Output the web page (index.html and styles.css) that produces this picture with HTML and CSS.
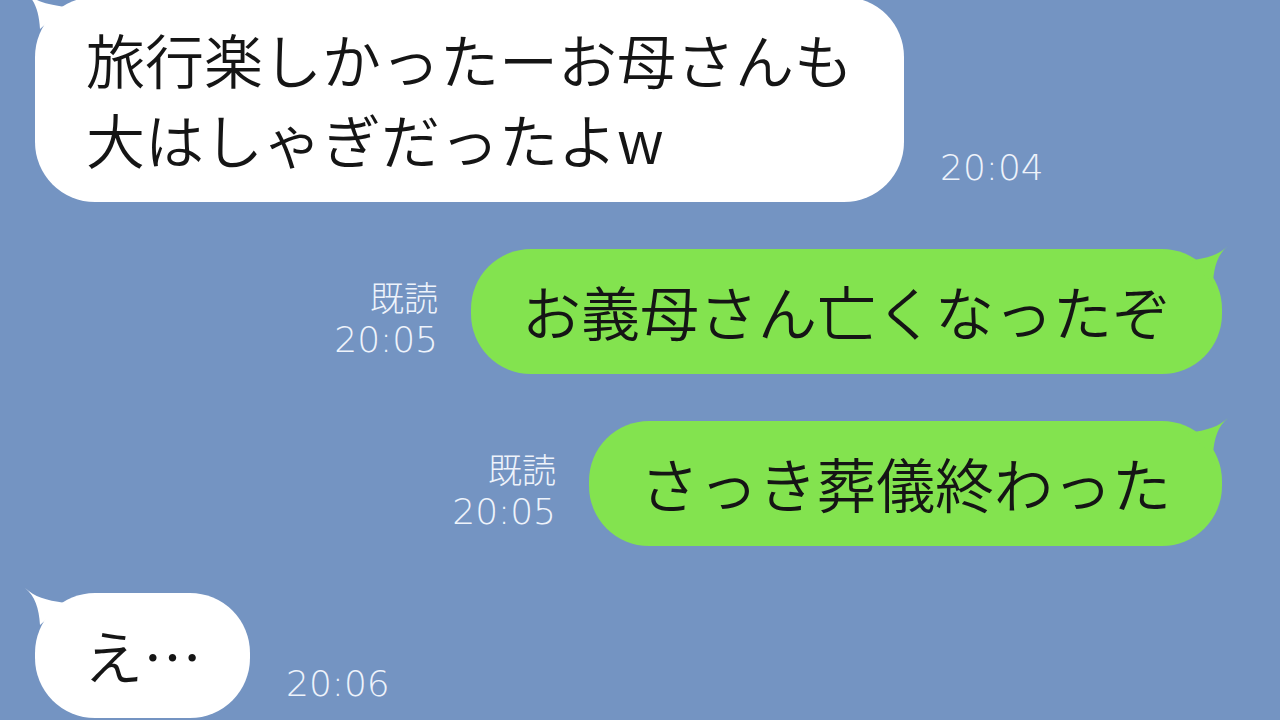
FILE: index.html
```html
<!DOCTYPE html>
<html lang="ja">
<head>
<meta charset="utf-8">
<link rel="stylesheet" href="styles.css">
</head>
<body>
<main class="chat">
  <div class="row left first">
    <div class="bubble white">
      <svg class="tail tail-left" viewBox="0 0 40 40" width="40" height="40"><path d="M0 0 C10 8 14 20 15 37 L40 15 C20 12 10 9 0 0 Z"/></svg>
      <p class="msg">旅行楽しかったーお母さんも<br>大はしゃぎだったよw</p>
    </div>
    <div class="meta"><span class="time">20:04</span></div>
  </div>
  <div class="row right">
    <div class="meta"><span class="read">既読</span><span class="time">20:05</span></div>
    <div class="bubble green">
      <svg class="tail tail-right" viewBox="0 0 40 40" width="40" height="40"><path d="M40 0 C30 8 26 20 25 37 L0 15 C20 12 30 9 40 0 Z"/></svg>
      <p class="msg">お義母さん亡くなったぞ</p>
    </div>
  </div>
  <div class="row right">
    <div class="meta"><span class="read">既読</span><span class="time">20:05</span></div>
    <div class="bubble green">
      <svg class="tail tail-right" viewBox="0 0 40 40" width="40" height="40"><path d="M40 0 C30 8 26 20 25 37 L0 15 C20 12 30 9 40 0 Z"/></svg>
      <p class="msg">さっき葬儀終わった</p>
    </div>
  </div>
  <div class="row left">
    <div class="bubble white short">
      <svg class="tail tail-left" viewBox="0 0 40 40" width="40" height="40"><path d="M0 0 C10 8 14 20 15 37 L40 15 C20 12 10 9 0 0 Z"/></svg>
      <p class="msg">え…</p>
    </div>
    <div class="meta"><span class="time">20:06</span></div>
  </div>
</main>
</body>
</html>
```
FILE: styles.css
```css
html, body {
  margin: 0;
  padding: 0;
}
body {
  width: 1280px;
  height: 720px;
  overflow: hidden;
  background: #7494c2;
  font-family: "Noto Sans CJK JP", "Noto Sans", sans-serif;
}
.chat {
  display: flex;
  flex-direction: column;
  gap: 47px;
  padding: 0 58px 0 35px;
  margin-top: -3px;
}
.row {
  display: flex;
  align-items: flex-end;
}
.row.left {
  justify-content: flex-start;
  gap: 36px;
}
.row.right {
  justify-content: flex-end;
  gap: 33px;
}
.bubble {
  position: relative;
  border-radius: 60px;
  padding: 22px 51px 23px;
}
.bubble.short {
  padding-left: 49px;
  padding-right: 48px;
}
.bubble.white { background: #ffffff; }
.bubble.green { background: #83e34f; }
.white .tail { fill: #ffffff; }
.green .tail { fill: #83e34f; }
.tail {
  position: absolute;
  top: -5px;
  overflow: visible;
}
.tail-left { left: -10px; }
.tail-right { right: -6px; top: -3px; }
.msg {
  margin: 0;
  font-size: 59px;
  line-height: 80px;
  color: #151515;
  font-weight: 350;
  white-space: nowrap;
}
.meta {
  display: flex;
  flex-direction: column;
  align-items: flex-end;
  margin-bottom: 13px;
  color: #eef3fb;
  font-size: 34px;
  line-height: 43px;
}
.read {
  font-family: "Noto Sans CJK JP", sans-serif;
  font-weight: 300;
}
.time {
  font-family: "DejaVu Sans", sans-serif;
  font-weight: 200;
  font-size: 36px;
}
```
